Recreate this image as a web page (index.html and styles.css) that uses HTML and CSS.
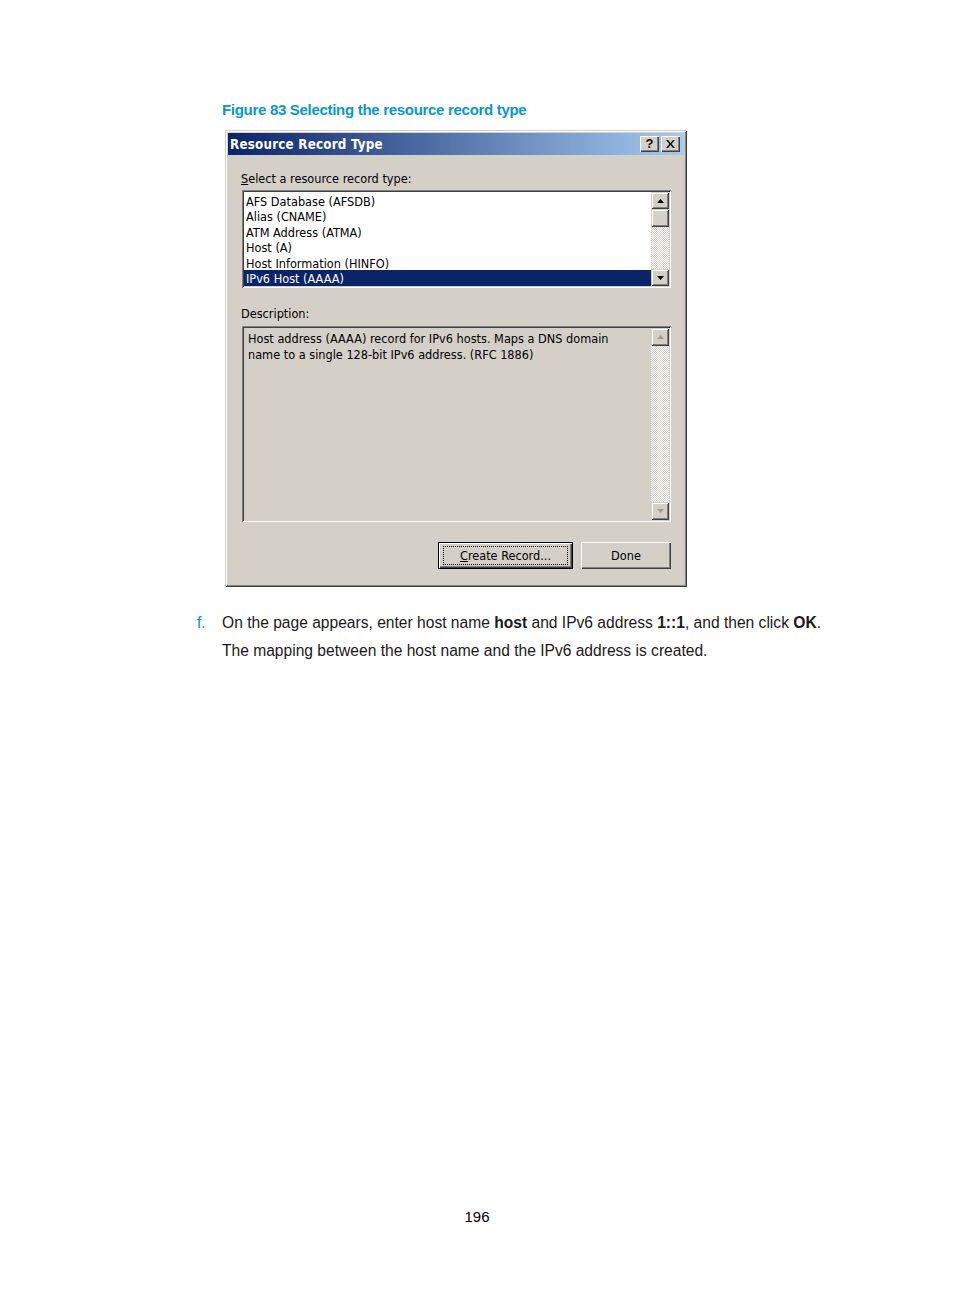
FILE: index.html
```html
<!DOCTYPE html>
<html>
<head>
<meta charset="utf-8">
<link rel="stylesheet" href="styles.css">
</head>
<body>
<div class="page">
  <div class="caption">Figure 83 Selecting the resource record type</div>
  <div class="dialog">
    <div class="titlebar">
      <span class="title">Resource Record Type</span>
      <div class="tbtns">
        <span class="tbtn">?</span>
        <span class="tbtn close">
          <svg width="9" height="8" viewBox="0 0 9 8"><path d="M0 0h2l2.5 3 2.5-3h2L5.5 4 9 8H7L4.5 5 2 8H0l3.5-4z" fill="#000"/></svg>
        </span>
      </div>
    </div>
    <div class="body">
      <div class="label"><u>S</u>elect a resource record type:</div>
      <div class="listbox">
        <div class="items">
          <div class="item">AFS Database (AFSDB)</div>
          <div class="item">Alias (CNAME)</div>
          <div class="item">ATM Address (ATMA)</div>
          <div class="item">Host (A)</div>
          <div class="item">Host Information (HINFO)</div>
          <div class="item sel">IPv6 Host (AAAA)</div>
        </div>
        <div class="vscroll">
          <div class="sbtn"><svg width="7" height="4" viewBox="0 0 7 4"><path d="M3.5 0L7 4H0z" fill="#000"/></svg></div>
          <div class="sbtn thumb"></div>
          <div class="track"></div>
          <div class="sbtn"><svg width="7" height="4" viewBox="0 0 7 4"><path d="M0 0h7L3.5 4z" fill="#000"/></svg></div>
        </div>
      </div>
      <div class="label desc-label">Description:</div>
      <div class="descbox">
        <div class="desctext">Host address (AAAA) record for IPv6 hosts. Maps a DNS domain name to a single 128-bit IPv6 address. (RFC 1886)</div>
        <div class="vscroll disabled">
          <div class="sbtn"><svg width="7" height="4" viewBox="0 0 7 4"><path d="M3.5 0L7 4H0z" fill="#a09c94"/></svg></div>
          <div class="track"></div>
          <div class="sbtn"><svg width="7" height="4" viewBox="0 0 7 4"><path d="M0 0h7L3.5 4z" fill="#a09c94"/></svg></div>
        </div>
      </div>
      <div class="buttons">
        <div class="btn default"><span class="focus"><u>C</u>reate Record...</span></div>
        <div class="btn done">Done</div>
      </div>
    </div>
  </div>
  <div class="step">
    <span class="marker">f.</span>
    <div class="steptext">
      <p>On the page appears, enter host name <b>host</b> and IPv6 address <b>1::1</b>, and then click <b>OK</b>.</p>
      <p>The mapping between the host name and the IPv6 address is created.</p>
    </div>
  </div>
  <div class="pagenum">196</div>
</div>
</body>
</html>
```
FILE: styles.css
```css
html, body {
  margin: 0;
  padding: 0;
  background: #fff;
}
.page {
  width: 954px;
  height: 1296px;
  position: relative;
  font-family: "Liberation Sans", Arial, sans-serif;
  color: #000;
}
.caption {
  padding-top: 100px;
  margin-left: 222px;
  font-family: "Liberation Sans", Arial, sans-serif;
  font-size: 15px;
  font-weight: bold;
  color: #0a96d2;
  line-height: 20px;
  letter-spacing: -0.3px;
}
.dialog {
  margin-left: 225px;
  margin-top: 10px;
  width: 462px;
  height: 457px;
  box-sizing: border-box;
  background: #d4d0c8;
  padding: 3px;
  box-shadow: inset 1px 1px #d4d0c8, inset -1px -1px #404040, inset 2px 2px #fff, inset -2px -2px #808080;
  font-family: "DejaVu Sans Condensed", "DejaVu Sans", sans-serif;
  font-size: 12.6px;
  display: flex;
  flex-direction: column;
}
.titlebar {
  height: 22px;
  background: linear-gradient(to right, #0a246a, #a6caf0);
  display: flex;
  align-items: center;
  justify-content: space-between;
  padding: 0 4px 0 2px;
}
.title {
  color: #fff;
  font-weight: bold;
  font-size: 13.3px;
  letter-spacing: 0.2px;
}
.tbtns {
  display: flex;
  gap: 2px;
}
.tbtn {
  width: 19px;
  height: 16px;
  box-sizing: border-box;
  background: #d4d0c8;
  box-shadow: inset 1px 1px #fff, inset -1px -1px #404040, inset -2px -2px #808080;
  display: flex;
  align-items: center;
  justify-content: center;
  font-weight: bold;
  font-size: 13px;
  font-family: "Liberation Sans", Arial, sans-serif;
  line-height: 16px;
}
.body {
  padding: 16px 13px 0 14px;
  display: flex;
  flex-direction: column;
}
.label {
  line-height: 16px;
  margin-left: -1px;
}
.listbox {
  margin-top: 3px;
  height: 98px;
  box-sizing: border-box;
  background: #fff;
  padding: 2px;
  box-shadow: inset 1px 1px #808080, inset -1px -1px #fff, inset 2px 2px #404040, inset -2px -2px #d4d0c8;
  display: flex;
}
.items {
  flex: 1;
}
.item {
  height: 15.6px;
  box-sizing: border-box;
  padding: 1.5px 0 0 2px;
  line-height: 15.6px;
  white-space: nowrap;
}
.item.sel {
  background: #0a246a;
  color: #fff;
}
.vscroll {
  width: 18px;
  display: flex;
  flex-direction: column;
}
.sbtn {
  height: 17px;
  box-sizing: border-box;
  background: #d4d0c8;
  box-shadow: inset 1px 1px #d4d0c8, inset -1px -1px #404040, inset 2px 2px #fff, inset -2px -2px #808080;
  display: flex;
  align-items: center;
  justify-content: center;
}
.sbtn.thumb {
  height: 18px;
}
.track {
  flex: 1;
  background-color: #fff;
  background-image: repeating-conic-gradient(#d4d0c8 0 25%, #fff 0 50%);
  background-size: 2px 2px;
}
.desc-label {
  margin-top: 18px;
}
.descbox {
  margin-top: 4px;
  height: 196px;
  box-sizing: border-box;
  padding: 2px;
  box-shadow: inset 1px 1px #808080, inset -1px -1px #fff, inset 2px 2px #404040, inset -2px -2px #d4d0c8;
  display: flex;
}
.desctext {
  flex: 1;
  padding: 3px 20px 0 4px;
  line-height: 16px;
}
.vscroll.disabled .sbtn {
  height: 18px;
}
.buttons {
  margin-top: 20px;
  display: flex;
  justify-content: flex-end;
  gap: 8px;
  padding-right: 0;
}
.btn {
  height: 27px;
  box-sizing: border-box;
  background: #d4d0c8;
  box-shadow: inset 1px 1px #fff, inset -1px -1px #404040, inset -2px -2px #808080;
  display: flex;
  align-items: center;
  justify-content: center;
}
.btn.default {
  width: 135px;
  border: 1px solid #000;
}
.btn .focus {
  border: 1px dotted #000;
  padding: 1px 0;
  width: 123px;
  text-align: center;
  line-height: 15px;
}
.btn.done {
  width: 90px;
}
.step {
  margin-top: 22px;
  margin-left: 197px;
  display: flex;
  font-size: 15.6px;
}
.marker {
  width: 25px;
  color: #0a96d2;
  line-height: 28px;
}
.steptext p {
  margin: 0;
  line-height: 28px;
  color: #1a1a1a;
}
.pagenum {
  position: absolute;
  top: 1207px;
  left: 0;
  width: 954px;
  text-align: center;
  font-size: 15px;
  line-height: 20px;
}
```
